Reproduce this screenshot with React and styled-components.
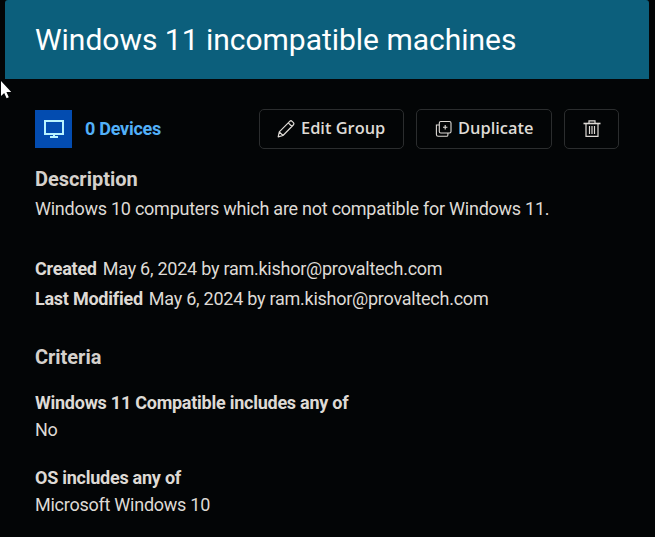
import React from "react";
import styled, { createGlobalStyle } from "styled-components";

const GlobalStyle = createGlobalStyle`
  * { box-sizing: border-box; }
  html, body { margin: 0; background: #030506; }
  body { overflow: hidden; }
`;

const Page = styled.main`
  position: relative;
  width: 655px;
  height: 537px;
  padding: 0 6px 0 5px;
  background: #030506;
  color: #dedad5;
  font-family: Roboto, "Liberation Sans", sans-serif;
  overflow: hidden;
`;

const Header = styled.header`
  display: flex;
  align-items: center;
  height: 79px;
  padding: 0 30px;
  border-radius: 3px 3px 0 0;
  background: #0c5f7c;
`;

const Title = styled.h1`
  margin: 0;
  color: #fff;
  font-size: 30px;
  font-weight: 400;
  line-height: 40px;
  letter-spacing: -0.02px;
  white-space: nowrap;
`;

const Content = styled.div`
  padding: 30px 30px 0;
`;

const Toolbar = styled.div`
  display: flex;
  align-items: center;
  height: 40px;
`;

const DeviceTile = styled.span`
  display: flex;
  width: 37px;
  height: 38px;
  background: #034cb0;
`;

const DeviceCount = styled.span`
  margin-left: 13px;
  padding-bottom: 2px;
  color: #52b0f8;
  font-size: 18px;
  font-weight: 700;
  letter-spacing: -0.25px;
  white-space: nowrap;
`;

const Actions = styled.div`
  display: flex;
  gap: 12px;
  margin-left: auto;
`;

const Button = styled.button`
  display: flex;
  align-items: center;
  width: ${(p) => p.$width}px;
  height: 40px;
  padding: 0 0 0 17px;
  gap: 4px;
  border: 1px solid #2b2d2e;
  border-radius: 5px;
  background: transparent;
  color: #dedad5;
  font: 600 16.4px/24px "Open Sans", sans-serif;
  white-space: nowrap;
`;

const ButtonLabel = styled.span`
  padding-bottom: 2px;
`;

const Heading = styled.h2`
  margin: ${(p) => p.$top}px 0 0;
  color: #d5d1cc;
  font-size: 20px;
  font-weight: 700;
  line-height: 30px;
  letter-spacing: -0.03px;
  white-space: nowrap;
`;

const Line = styled.p`
  margin: ${(p) => p.$top || 0}px 0 0;
  font-size: 18px;
  line-height: ${(p) => p.$height || 30}px;
  letter-spacing: -0.25px;
  white-space: nowrap;
`;

const Label = styled.strong`
  margin-right: ${(p) => p.$gap || 0}px;
  font-weight: 700;
`;

const Cursor = styled.svg`
  position: absolute;
  left: 0;
  top: 80px;
`;

const MonitorIcon = () => (
  <svg width="37" height="38" viewBox="0 0 37 38" fill="none" stroke="#b9f3ff" strokeWidth="2">
    <path d="M10 11h18v13H10zM19 24v3M15 27h8" />
  </svg>
);

const PencilIcon = () => (
  <svg width="20" height="20" viewBox="0 0 20 20" fill="none" stroke="currentColor" strokeWidth="1.2" strokeLinejoin="round">
    <path d="M1.2 17.8l1.1-5L12.7 2.4c.8-.8 1.7-.8 2.4-.1l1.3 1.3c.7.8.7 1.7-.1 2.4L6 16.5zM2.3 12.8L6 16.5M11.3 3.9l3.6 3.6" />
  </svg>
);

const DuplicateIcon = () => (
  <svg width="20" height="20" viewBox="0 0 20 20" fill="none" stroke="currentColor" strokeWidth="1.1">
    <rect x="5.3" y="2.5" width="11.7" height="11.5" rx="1.5" />
    <path d="M11.2 6.1v4.4M9 8.3h4.4M5.3 6H2.4v9.5c0 1.2.6 1.8 1.8 1.8h8.3c1 0 1.4-.4 1.4-1.4V14" />
  </svg>
);

const TrashIcon = () => (
  <svg width="20" height="20" viewBox="0 0 20 20" fill="none" stroke="currentColor">
    <path d="M1.5 4.5h17" strokeWidth="1.6" />
    <path d="M7 4V1.8h6V4M4 5v12.4h12V5M7.5 7v8M10 7v8M12.5 7v8" strokeWidth="1.2" />
  </svg>
);

export default function App() {
  return (
    <>
      <GlobalStyle />
      <Page>
        <Header>
          <Title>Windows 11 incompatible machines</Title>
        </Header>
        <Content>
          <Toolbar>
            <DeviceTile><MonitorIcon /></DeviceTile>
            <DeviceCount>0 Devices</DeviceCount>
            <Actions>
              <Button $width={145}><PencilIcon /><ButtonLabel>Edit Group</ButtonLabel></Button>
              <Button $width={136}><DuplicateIcon /><ButtonLabel>Duplicate</ButtonLabel></Button>
              <Button $width={55} aria-label="Delete group"><TrashIcon /></Button>
            </Actions>
          </Toolbar>
          <Heading $top={15}>Description</Heading>
          <Line>Windows 10 computers which are not compatible for Windows 11.</Line>
          <Line $top={30}><Label $gap={6}>Created</Label>May 6, 2024 by ram.kishor@provaltech.com</Line>
          <Line><Label $gap={6}>Last Modified</Label>May 6, 2024 by ram.kishor@provaltech.com</Line>
          <Heading $top={28}>Criteria</Heading>
          <Line $top={17} $height={27}><Label>Windows 11 Compatible includes any of</Label></Line>
          <Line $height={27}>No</Line>
          <Line $top={21} $height={27}><Label>OS includes any of</Label></Line>
          <Line $height={27}>Microsoft Windows 10</Line>
        </Content>
        <Cursor width="13" height="20" viewBox="0 0 13 20" aria-hidden="true">
          <path d="M1 1v15l3.2-3.1 2.4 5.4 2.2-1-2.4-5.2h4.8z" fill="#fff" />
        </Cursor>
      </Page>
    </>
  );
}
